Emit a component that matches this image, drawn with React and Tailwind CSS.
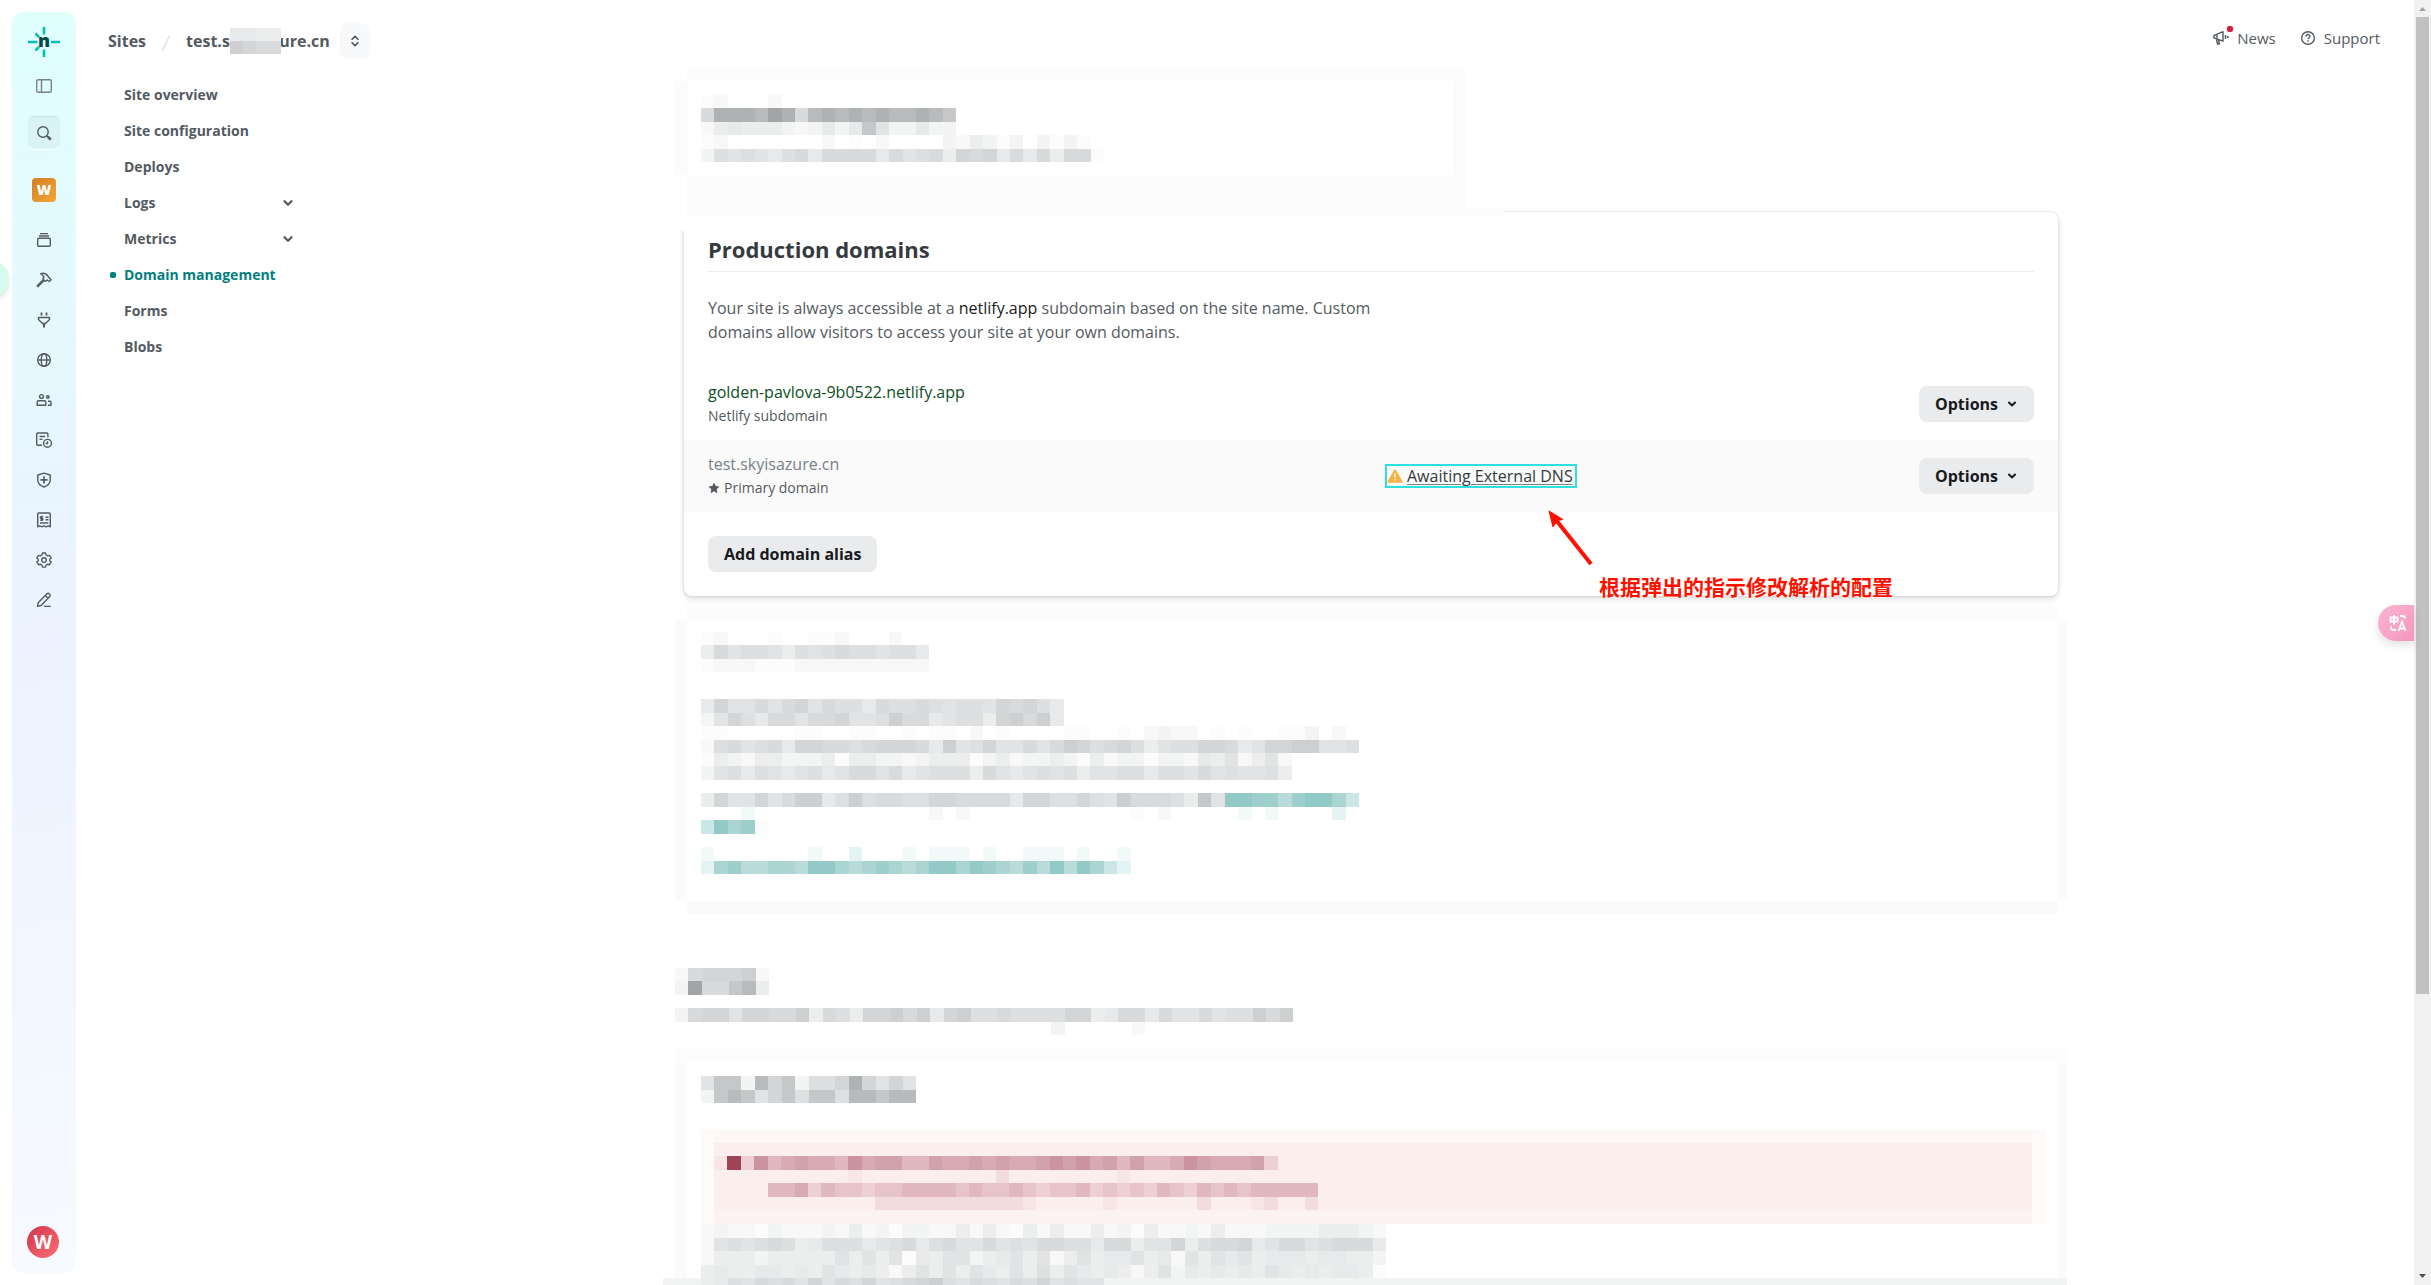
import React from "react";
import { ChevronDown, ChevronsUpDown } from "lucide-react";

const palette = {
  a: "#fcfcfc", b: "#f8f8f8", c: "#f3f4f4", d: "#eceeee", e: "#e8e9ea",
  f: "#e2e3e5", g: "#dedfe1", h: "#d9dadc", i: "#d4d5d7", j: "#cecfd1",
  k: "#c6c7c9", l: "#b9babc", m: "#aeb2b2", n: "#a3a4a6",
  P: "#f1f9f9", Q: "#e4f3f3", R: "#cbe6e6", S: "#b9dcdb", T: "#aad5d3",
  U: "#9fcfcd", V: "#93cac7",
  2: "#f8e5e5", 3: "#f2dcdd", 4: "#ecd0d3", 5: "#e6c4c9", 6: "#e0b8be",
  7: "#d8abb3", 8: "#d2a2aa", 9: "#cc949f", W: "#a04455",
};

// One character per cell, "." leaves the cell empty
const mosaics = {
  site: ["eedd", "jihh"],
  intro: [
    "ab...b",
    "hmmmlnmhlmlmlmllmlk",
    "bdedddcbcecekfccecc",
    "ab.......b.a.b....cbdcac.caca",
    "cgfgfeghehhhhehfghdihiehehdhha",
  ],
  https: [
    "ab...a..aab...b",
    "dhfggfdgfghggfgge",
    "abbbaaabbbbbbbbbb",
    "",
    "",
    "eiffhfhifhggehgghgfggfihige",
    "cfigehhfhhiffgjhhefggdijhje",
    "aa.....aa..aa..a.aa.b.a....aa..a.bcbb.a.a..aac.b",
    "bghfgheiihhghiiihejfgiffhfhjighigdfggiihefiijjffg",
    "adcbddcccdaddccbcdddacdbccdcadbccaccbedfbdfb",
    "cfgegfefgefhhfhefgggdhfefgfgdffggeggfhfgffgd",
    "",
    "diffifhjjegjghhggiihhhheiiggigfjhhhgdkfVVUUSUVVTR",
    "...P.............b.b............a.b.....P.P....Q",
    "RVTUa",
    "",
    "P.......P..Q...P.PPP.P..PPP.P..P",
    "QTUSSTTSVVTSTUTSTVVTVUTSUSVSVTRQ",
  ],
  forms: [
    "bhiiijb",
    "cnhhkld",
    "",
    "chiifiihhjdhgdiijhjeijgghggggiidehhehffhfggjhjf",
    "............................c.....b",
  ],
  formsTitle: ["fkkclikcggimifif", "cklkfikgkkgllkll"],
  alert: [
    "2W4967877697886687787877898978686679877784",
    "..........2..........3........2",
    "....66746554556666565565455645454654656566666",
    "............33333333333" + "2.....2......3...23..3",
  ],
  detail: [
    "bcbbacbbbcbdbcaccbbdbdbadbdbbdbcadbbcbdbbbccccdddcb",
    "bfgfghgdegggefgheghffhfgfhhggehhdffidghhiefhhfghhhe",
    "bdddcdddddfdfdfaedffcdefdfbdfdeefdebfdfefdeeedeeddc",
    "deddeededfededbdfdfdfedfdgdfededbdfcedededfededeeda",
  ],
  detailEnd: ["degfhghfifhgifghijgfhgfhgifgff"],
};

function Mosaic({ rows, cols, className }) {
  return (
    <svg
      viewBox={`0 0 ${cols} ${rows.length}`}
      preserveAspectRatio="none"
      shapeRendering="crispEdges"
      className={className}
      aria-hidden="true"
    >
      {rows.map((row, y) =>
        [...row].map((c, x) =>
          palette[c] ? (
            <rect key={`${x}-${y}`} x={x} y={y} width="1" height="1" fill={palette[c]} />
          ) : null,
        ),
      )}
    </svg>
  );
}

function Icon({ children }) {
  return (
    <svg
      viewBox="0 0 16 16"
      className="size-4"
      fill="none"
      stroke="currentColor"
      strokeWidth="1.4"
      strokeLinejoin="round"
    >
      {children}
    </svg>
  );
}

const railItems = [
  {
    label: "Sites",
    icon: (
      <>
        <path d="M4 1.6h8M3 4h10" />
        <rect x="1.7" y="6.2" width="12.6" height="8" rx="1" />
      </>
    ),
  },
  {
    label: "Builds",
    icon: (
      <>
        <path d="M4.6 1.6c3.400-.8 5.900.2 7.400 2.600l3 3.600-1.800 1.700-2-1.500-2 1.300-2.300-2.400 1.100-2.200z" />
        <path d="M7.600 8.200L1.200 14.600" strokeWidth="2.600" />
      </>
    ),
  },
  {
    label: "Integrations",
    icon: (
      <>
        <path d="M5.500 .5v3M10.500 .5v3" strokeWidth="1.800" />
        <path d="M2.500 5.500h11v2L9.500 11.500h-3L2.500 7.500z" />
        <path d="M8 11.500v4" strokeWidth="2" />
      </>
    ),
  },
  {
    label: "Domains",
    icon: (
      <>
        <circle cx="8" cy="8" r="6.300" />
        <ellipse cx="8" cy="8" rx="2.800" ry="6.300" />
        <path d="M1.700 8h12.600" />
      </>
    ),
  },
  {
    label: "Members",
    icon: (
      <>
        <circle cx="5.500" cy="4.500" r="1.900" />
        <circle cx="11.800" cy="5" r="1.300" />
        <path d="M1.200 13.200V10c0-.8.500-1.300 1.300-1.300h6c.8 0 1.300.5 1.300 1.300v3.200zM12 9.300h2c.6 0 1 .4 1 1v2.900h-3" />
      </>
    ),
  },
  {
    label: "Audit log",
    icon: (
      <>
        <path d="M6 13.300H1.700c-.6 0-1-.4-1-1V2c0-.6.4-1 1-1h9.200c.6 0 1 .4 1 1v3.300M3.500 4.500h5.600M3.500 7.400h3" />
        <circle cx="11.500" cy="11.300" r="3.900" />
        <path d="M11.500 9.200v2.300H9.700" />
      </>
    ),
  },
  {
    label: "Security",
    icon: (
      <>
        <path d="M8 1.100l6.200 1.900v5c0 3.300-2.500 5.700-6.200 7-3.700-1.300-6.200-3.700-6.200-7V3z" />
        <path d="M8 4.300v7.200M4.400 7.800h7.200" strokeWidth="1.700" />
      </>
    ),
  },
  {
    label: "Billing",
    icon: (
      <>
        <path d="M1.700 14.800V2c0-.6.400-1 1-1h10.600c.6 0 1 .4 1 1v12.800l-2.100-1-2.100 1-2.100-1-2.100 1-2.100-1z" />
        <path d="M9.500 5.200h3M9.500 7.700h3M4 11h8.300M7.200 4.600H5.100c-1 0-1 1.700 0 1.700h1c1.100 0 1.100 1.800 0 1.800H4M5.700 3.700v5.400" />
      </>
    ),
  },
  {
    label: "Settings",
    icon: (
      <>
        <path d="M6.500 1h3l.6 2 1.500.9 2-.5 1.500 2.600-1.400 1.500v1.200l1.400 1.400-1.500 2.600-2-.5-1.500.9-.6 2h-3l-.6-2-1.500-.9-2 .5-1.500-2.600 1.400-1.400V7.500L.9 6l1.500-2.600 2 .5 1.500-.9z" />
        <circle cx="8" cy="8.100" r="2.300" />
      </>
    ),
  },
  {
    label: "Edit",
    icon: (
      <path d="M1.500 14.400l.7-3.700 8.700-8.900c.7-.7 1.600-.7 2.300 0l.5.500c.7.700.7 1.600 0 2.300l-8.600 8.900-3.600.9zM9.300 3.600l2.700 2.800M8 14.400h6.800" />
    ),
  },
];

const siteLinks = [
  { label: "Site overview" },
  { label: "Site configuration" },
  { label: "Deploys" },
  { label: "Logs", expandable: true },
  { label: "Metrics", expandable: true },
  { label: "Domain management", active: true },
  { label: "Forms" },
  { label: "Blobs" },
];

function Logo() {
  return (
    <svg viewBox="0 0 32 30" className="h-[30px] w-8">
      <g stroke="#05bdba" strokeWidth="2.600">
        <path d="M16 0v7.500M16 22.500V30M0 15h9.500M23 15h9M7.500 6.500l3.600 3.600M7.500 23.500l3.600-3.600" />
      </g>
      <text
        x="16"
        y="20"
        textAnchor="middle"
        className="fill-[#014847] font-['Open_Sans',sans-serif] text-[18px] font-extrabold"
      >
        n
      </text>
    </svg>
  );
}

function Rail() {
  return (
    <aside className="my-3 ml-3 flex w-16 shrink-0 flex-col items-center rounded-xl bg-linear-170 from-[#dffffd] via-[#ecf2ff] to-[#f7fbff] text-[#545a61]">
      <a href="#home" aria-label="Netlify" className="mt-[15px]">
        <Logo />
      </a>
      <button aria-label="Collapse sidebar" className="mt-[21px] opacity-75">
        <Icon>
          <rect x="0.700" y="1.700" width="14.600" height="12.600" rx="1.500" />
          <path d="M5.500 1.700v12.600" />
        </Icon>
      </button>
      <button
        aria-label="Search"
        className="mt-[22px] flex h-[34px] w-8 items-center justify-center rounded-md border-t border-b border-t-[#cbe4e7] border-b-white bg-[#daf3f7]"
      >
        <Icon>
          <circle cx="7" cy="7" r="5.200" />
          <path d="M10.700 10.700l1.300 1.300" />
          <path d="M11.800 11.800l3 2.800" strokeWidth="2.600" />
        </Icon>
      </button>
      <a
        href="#team"
        className="mt-7 mb-[18px] flex size-6 items-center justify-center rounded bg-linear-135 from-[#d47f22] to-[#f3a638] text-[14px] leading-6 font-extrabold text-white"
      >
        W
      </a>
      <nav className="flex flex-col">
        {railItems.map((item) => (
          <a
            key={item.label}
            href={`#${item.label}`}
            aria-label={item.label}
            className="flex h-10 w-8 items-center justify-center"
          >
            <Icon>{item.icon}</Icon>
          </a>
        ))}
      </nav>
      <button className="mt-auto mr-[2px] mb-[15px] flex size-8 items-center justify-center rounded-full bg-linear-135 from-[#d42f48] to-[#fb6f76] text-[19px] leading-8 font-bold text-white">
        W
      </button>
    </aside>
  );
}

function Header() {
  return (
    <header className="flex h-[68px] shrink-0 items-start justify-between pr-[34px] text-[#545a61]">
      <div className="mt-[23px] flex h-9 items-center text-[16px] leading-9 font-bold">
        <a href="#sites">Sites</a>
        <svg viewBox="0 0 8 16" className="mx-4 mt-1 h-4 w-2" stroke="#d0d3d6" strokeWidth="1">
          <path d="M0.500 15.500L7.500 0.500" />
        </svg>
        <div className="relative">
          <a href="#site">test.skyisazure.cn</a>
          <div className="absolute top-[5px] left-11 bg-white">
            <Mosaic rows={mosaics.site} cols={4} className="h-[26px] w-[51px]" />
          </div>
        </div>
        <button
          aria-label="Switch site"
          className="ml-[10px] flex h-9 w-[30px] items-center justify-center rounded-lg bg-[#f7f9fa]"
        >
          <ChevronsUpDown className="size-[14px]" strokeWidth={3} />
        </button>
      </div>
      <div className="mt-[26px] flex items-center gap-6 text-[15px] leading-6">
        <a href="#news" className="flex items-center gap-2">
          <span className="relative">
            <Icon>
              <path d="M1 5.500l2-.8 7-3v9.500l-7-2.500-2-.6zM4 5v4M3.500 9.500l1 4.500h1.800l-.8-4" />
              <path d="M12.500 5v4M14.800 6v2" strokeWidth="1.500" />
            </Icon>
            <span className="absolute -top-1 -right-1 size-[6px] rounded-[2px] bg-[#d9213f]" />
          </span>
          News
        </a>
        <a href="#support" className="flex items-center gap-2">
          <Icon>
            <circle cx="8" cy="8" r="6.300" />
            <path d="M6 6.500c0-2.600 4-2.600 4-.2 0 1.500-2 1.400-2 3M8 10.300v1.500" />
          </Icon>
          Support
        </a>
      </div>
    </header>
  );
}

function SiteNav() {
  return (
    <nav className="mt-[9px] flex w-[220px] shrink-0 flex-col text-[14px] leading-9 font-bold text-[#545a61]">
      {siteLinks.map((link) => (
        <a
          key={link.label}
          href={`#${link.label}`}
          className={
            link.active
              ? "flex h-9 items-center text-[#02807d]"
              : "flex h-9 items-center"
          }
        >
          <span
            className={
              link.active
                ? "mr-2 ml-[2px] size-[6px] rounded-[2px] bg-[#02807d]"
                : "mr-2 ml-[2px] size-[6px]"
            }
          />
          {link.label}
          {link.expandable && <ChevronDown className="mr-[33px] ml-auto size-[14px]" strokeWidth={4} />}
        </a>
      ))}
    </nav>
  );
}

function OptionsButton() {
  return (
    <button className="flex h-9 items-center gap-2 rounded-lg bg-[#e9ebed] px-4 text-[16px] leading-6 font-bold text-[#181a1c]">
      Options
      <ChevronDown className="size-3" strokeWidth={4} />
    </button>
  );
}

function Annotation() {
  return (
    <div className="absolute top-[298px] left-[864px] w-[360px] text-[#ff1100]">
      <svg viewBox="0 0 46 56" className="h-14 w-[46px]">
        <path d="M8 10L43 54" stroke="currentColor" strokeWidth="4" />
        <path d="M1 1L15 9.500L9.500 10.500L5 17z" fill="currentColor" stroke="currentColor" />
      </svg>
      <p className="mt-[6px] ml-[51px] font-['Noto_Sans_CJK_SC',sans-serif] text-[21px] leading-7 font-bold whitespace-nowrap [text-shadow:0_0_2px_#fff,0_0_2px_#fff]">
        根据弹出的指示修改解析的配置
      </p>
    </div>
  );
}

function ProductionDomains() {
  return (
    <section className="relative mx-[9px] rounded-lg bg-white shadow-[0_0_2px_1px_rgba(14,30,37,0.08),0_3px_6px_rgba(14,30,37,0.14)]">
      <div className="absolute -top-1 -left-[9px] h-[23px] w-[829px] bg-white">
        <div className="ml-3 h-2 bg-[#fcfcfc]" />
      </div>
      <div className="px-6 pt-[21px]">
        <h2 className="border-b border-[#e9ebed] pb-[6px] text-[22px] leading-8 font-bold text-[#353a3e]">
          Production domains
        </h2>
        <p className="mt-6 max-w-[690px] text-[16px] leading-6 text-[#545a61]">
          Your site is always accessible at a <span className="text-[#181a1c]">netlify.app</span>{" "}
          subdomain based on the site name. Custom domains allow visitors to access your site at
          your own domains.
        </p>
      </div>
      <ul className="mt-6">
        <li className="flex items-center justify-between px-6 py-3">
          <div>
            <a href="#golden" className="block text-[16px] leading-6 text-[#0c4f1e]">
              golden-pavlova-9b0522.netlify.app
            </a>
            <p className="text-[14px] leading-6 text-[#545a61]">Netlify subdomain</p>
          </div>
          <OptionsButton />
        </li>
        <li className="grid grid-cols-[677px_1fr_auto] items-center bg-[#fafafa] px-6 py-3">
          <div>
            <a href="#test" className="block text-[16px] leading-6 text-[#778089]">
              test.skyisazure.cn
            </a>
            <p className="flex items-center gap-1 text-[14px] leading-6 text-[#545a61]">
              <svg viewBox="0 0 12 12" className="size-3" fill="currentColor">
                <path d="M6 0.500l1.700 3.600 3.800.5-2.800 2.700.7 3.900L6 9.300l-3.400 1.900.7-3.900L.5 4.600l3.800-.5z" />
              </svg>
              Primary domain
            </p>
          </div>
          <a
            href="#dns"
            className="flex h-6 w-fit items-center gap-1 border-2 border-[#2de0e0] pr-[2px] text-[16px] leading-5 text-[#353a3e]"
          >
            <svg viewBox="0 0 16 14" className="h-[14px] w-4">
              <path d="M8 1.500L14.500 12.800H1.500z" fill="#fbb13d" stroke="#fbb13d" strokeWidth="2" strokeLinejoin="round" />
              <path d="M8 4.500v4M8 10v1.700" stroke="#fff" strokeWidth="1.600" />
            </svg>
            <span className="underline decoration-[#778089] underline-offset-2">
              Awaiting External DNS
            </span>
          </a>
          <OptionsButton />
        </li>
      </ul>
      <div className="p-6">
        <button className="h-9 rounded-lg bg-[#e9ebed] px-4 text-[16px] leading-6 font-bold text-[#181a1c]">
          Add domain alias
        </button>
      </div>
      <Annotation />
    </section>
  );
}

function Content() {
  return (
    <main className="min-w-0 flex-1">
      <div className="mx-auto max-w-[1392px]">
        <section>
          <div className="ml-3 h-[13px] w-[779px] bg-[#fcfcfc]" />
          <div className="h-[94px] w-[791px] border-x-[13px] border-[#fafcfb] bg-white px-[13px] pt-[14px]">
            <Mosaic rows={mosaics.intro} cols={30} className="h-[67px] w-[403px]" />
          </div>
          <div className="ml-3 h-[37px] w-[779px] bg-[#fcfcfc]" />
        </section>

        <ProductionDomains />

        <section className="mt-[10px]">
          <div className="mr-[9px] ml-3 h-[13px] bg-[#fcfcfc]" />
          <div className="border-r-[9px] border-l-[12px] border-[#fafcfb] bg-white pt-[13px] pb-[27px] pl-[14px]">
            <Mosaic rows={mosaics.https} cols={49} className="h-[242px] w-[658px]" />
          </div>
          <div className="mr-[9px] ml-3 h-[13px] bg-[#fafafa]" />
        </section>

        <section className="mt-[54px]">
          <Mosaic rows={mosaics.forms} cols={46} className="h-[67px] w-[618px]" />
          <div className="mt-[14px] h-[13px] bg-[#fdfdfd]" />
          <div className="border-r-[9px] border-l-[12px] border-[#fafcfb] bg-white pt-[14px] pl-[14px]">
            <Mosaic rows={mosaics.formsTitle} cols={16} className="h-[27px] w-[215px]" />
            <div className="mt-[27px] mr-[13px] border-x-[13px] border-[#fdfaf9] bg-[#fbeeec]">
              <div className="h-[13px] bg-[#fdf8f5]" />
              <Mosaic rows={mosaics.alert} cols={45} className="mt-[13px] h-[54px] w-[604px]" />
              <div className="h-[14px] bg-[#fcf1f3]" />
            </div>
            <Mosaic rows={mosaics.detail} cols={51} className="h-[54px] w-[685px]" />
          </div>
          <div className="-ml-3 h-[13px] bg-[#f2f4f4] pl-[38px]">
            <Mosaic rows={mosaics.detailEnd} cols={30} className="h-[13px] w-[403px]" />
          </div>
        </section>
      </div>
    </main>
  );
}

function Scrollbar() {
  return (
    <div className="flex w-[17px] shrink-0 flex-col items-center bg-[#f1f1f1]" aria-hidden="true">
      <svg viewBox="0 0 17 17" className="h-[17px] w-[17px] shrink-0" fill="#a3a3a3">
        <path d="M5 11h7L8.500 7z" />
      </svg>
      <div className="h-[76%] w-[13px] bg-[#c1c1c1]" />
      <svg viewBox="0 0 17 17" className="mt-auto h-[17px] w-[17px] shrink-0" fill="#505050">
        <path d="M5 6h7L8.500 10z" />
      </svg>
    </div>
  );
}

export default function App() {
  return (
    <div className="relative flex h-screen overflow-hidden bg-white font-['Open_Sans','Noto_Sans',sans-serif]">
      <Rail />
      <div className="absolute top-[260px] -left-[29px] size-[38px] rounded-full bg-[#d5fbec] shadow-md" />
      <div className="ml-8 flex min-w-0 flex-1 flex-col">
        <Header />
        <div className="flex">
          <SiteNav />
          <Content />
        </div>
      </div>
      <button
        aria-label="Translate"
        className="absolute top-[605px] right-[17px] flex h-9 w-9 items-center justify-center rounded-l-full bg-linear-135 from-[#fbb4d2] to-[#f597bd] pl-1 shadow-[0_4px_10px_rgba(0,0,0,0.12)]"
      >
        <svg viewBox="0 0 18 18" className="size-[18px]" fill="none" stroke="#fff" strokeWidth="1.800">
          <path d="M1.500 3.500h7v4h-7zM5 1v9.500M11 2h2.500c1.500 0 2.500 1 2.500 2.500M2 12v1.500C2 15 3 16 4.500 16H7M9.500 17l3.500-9 3.500 9M10.500 14.500h5" />
        </svg>
      </button>
      <Scrollbar />
    </div>
  );
}
